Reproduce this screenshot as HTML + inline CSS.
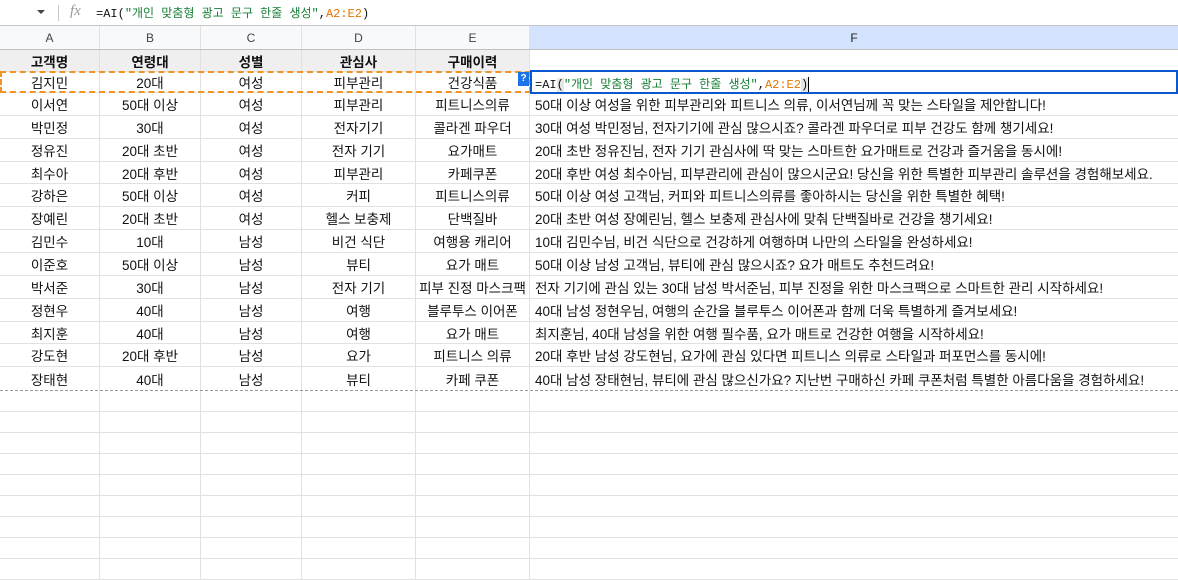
<!DOCTYPE html>
<html><head><meta charset="utf-8"><style>
*{box-sizing:border-box;margin:0;padding:0}
body{width:1178px;height:575px;overflow:hidden;background:#fff;font-family:"Liberation Sans","Noto Sans CJK KR",sans-serif;position:relative;color:#111}
#fb{position:absolute;left:0;top:0;width:1178px;height:26px;border-bottom:1px solid #c7c7c7;background:#fff}
.mono{font-family:"Liberation Mono","Noto Sans CJK KR",monospace}
.row{position:absolute;left:0;width:1178px;display:flex;border-bottom:1px solid #e1e1e1}
.c{border-right:1px solid #e1e1e1;height:100%;display:flex;align-items:center;justify-content:center;font-size:13.5px;white-space:nowrap;overflow:visible}
.w1{width:100px}.w2{width:101px}.w3{width:101px}.w4{width:114px}.w5{width:114px}.w6{width:648px;justify-content:flex-start;padding-left:5px;border-right:none}
.hd .c{font-size:12px;color:#444;background:#f8f9fa}
.g{color:#188038}.o{color:#e37400}
</style></head><body>
<div id="fb">
 <div style="position:absolute;left:37px;top:10px;width:0;height:0;border-left:4px solid transparent;border-right:4px solid transparent;border-top:4px solid #444"></div>
 <div style="position:absolute;left:58px;top:5px;width:1px;height:16px;background:#c7c7c7"></div>
 <div style="position:absolute;left:70px;top:3px;font-family:'Liberation Serif',serif;font-style:italic;font-size:15px;color:#999">fx</div>
 <div class="mono" style="position:absolute;left:96px;top:4px;font-size:12px;color:#111">=AI(<span class="g">"개인 맞춤형 광고 문구 한줄 생성"</span>,<span class="o">A2:E2</span>)</div>
</div>
<div class="row hd" style="top:26px;height:24px;border-bottom:1px solid #c0c0c0">
 <div class="c w1">A</div><div class="c w2">B</div><div class="c w3">C</div><div class="c w4">D</div><div class="c w5">E</div><div class="c w6" style="justify-content:center;padding-left:0;background:#d3e3fd;color:#1f1f1f">F</div>
</div>
<div class="row" style="top:50px;height:22px;font-weight:bold">
 <div class="c w1" style="background:#efefef;font-weight:bold">고객명</div><div class="c w2" style="background:#efefef;font-weight:bold">연령대</div><div class="c w3" style="background:#efefef;font-weight:bold">성별</div><div class="c w4" style="background:#efefef;font-weight:bold">관심사</div><div class="c w5" style="background:#efefef;font-weight:bold">구매이력</div><div class="c w6"></div>
</div>
<div class="row" style="top:72px;height:21px"><div class="c w1">김지민</div><div class="c w2">20대</div><div class="c w3">여성</div><div class="c w4">피부관리</div><div class="c w5">건강식품</div><div class="c w6"></div></div>
<div class="row" style="top:93px;height:23px"><div class="c w1">이서연</div><div class="c w2">50대 이상</div><div class="c w3">여성</div><div class="c w4">피부관리</div><div class="c w5">피트니스의류</div><div class="c w6">50대 이상 여성을 위한 피부관리와 피트니스 의류, 이서연님께 꼭 맞는 스타일을 제안합니다!</div></div>
<div class="row" style="top:116px;height:23px"><div class="c w1">박민정</div><div class="c w2">30대</div><div class="c w3">여성</div><div class="c w4">전자기기</div><div class="c w5">콜라겐 파우더</div><div class="c w6">30대 여성 박민정님, 전자기기에 관심 많으시죠? 콜라겐 파우더로 피부 건강도 함께 챙기세요!</div></div>
<div class="row" style="top:139px;height:23px"><div class="c w1">정유진</div><div class="c w2">20대 초반</div><div class="c w3">여성</div><div class="c w4">전자 기기</div><div class="c w5">요가매트</div><div class="c w6">20대 초반 정유진님, 전자 기기 관심사에 딱 맞는 스마트한 요가매트로 건강과 즐거움을 동시에!</div></div>
<div class="row" style="top:162px;height:22px"><div class="c w1">최수아</div><div class="c w2">20대 후반</div><div class="c w3">여성</div><div class="c w4">피부관리</div><div class="c w5">카페쿠폰</div><div class="c w6">20대 후반 여성 최수아님, 피부관리에 관심이 많으시군요! 당신을 위한 특별한 피부관리 솔루션을 경험해보세요.</div></div>
<div class="row" style="top:184px;height:23px"><div class="c w1">강하은</div><div class="c w2">50대 이상</div><div class="c w3">여성</div><div class="c w4">커피</div><div class="c w5">피트니스의류</div><div class="c w6">50대 이상 여성 고객님, 커피와 피트니스의류를 좋아하시는 당신을 위한 특별한 혜택!</div></div>
<div class="row" style="top:207px;height:23px"><div class="c w1">장예린</div><div class="c w2">20대 초반</div><div class="c w3">여성</div><div class="c w4">헬스 보충제</div><div class="c w5">단백질바</div><div class="c w6">20대 초반 여성 장예린님, 헬스 보충제 관심사에 맞춰 단백질바로 건강을 챙기세요!</div></div>
<div class="row" style="top:230px;height:23px"><div class="c w1">김민수</div><div class="c w2">10대</div><div class="c w3">남성</div><div class="c w4">비건 식단</div><div class="c w5">여행용 캐리어</div><div class="c w6">10대 김민수님, 비건 식단으로 건강하게 여행하며 나만의 스타일을 완성하세요!</div></div>
<div class="row" style="top:253px;height:23px"><div class="c w1">이준호</div><div class="c w2">50대 이상</div><div class="c w3">남성</div><div class="c w4">뷰티</div><div class="c w5">요가 매트</div><div class="c w6">50대 이상 남성 고객님, 뷰티에 관심 많으시죠? 요가 매트도 추천드려요!</div></div>
<div class="row" style="top:276px;height:23px"><div class="c w1">박서준</div><div class="c w2">30대</div><div class="c w3">남성</div><div class="c w4">전자 기기</div><div class="c w5">피부 진정 마스크팩</div><div class="c w6">전자 기기에 관심 있는 30대 남성 박서준님, 피부 진정을 위한 마스크팩으로 스마트한 관리 시작하세요!</div></div>
<div class="row" style="top:299px;height:23px"><div class="c w1">정현우</div><div class="c w2">40대</div><div class="c w3">남성</div><div class="c w4">여행</div><div class="c w5">블루투스 이어폰</div><div class="c w6">40대 남성 정현우님, 여행의 순간을 블루투스 이어폰과 함께 더욱 특별하게 즐겨보세요!</div></div>
<div class="row" style="top:322px;height:22px"><div class="c w1">최지훈</div><div class="c w2">40대</div><div class="c w3">남성</div><div class="c w4">여행</div><div class="c w5">요가 매트</div><div class="c w6">최지훈님, 40대 남성을 위한 여행 필수품, 요가 매트로 건강한 여행을 시작하세요!</div></div>
<div class="row" style="top:344px;height:23px"><div class="c w1">강도현</div><div class="c w2">20대 후반</div><div class="c w3">남성</div><div class="c w4">요가</div><div class="c w5">피트니스 의류</div><div class="c w6">20대 후반 남성 강도현님, 요가에 관심 있다면 피트니스 의류로 스타일과 퍼포먼스를 동시에!</div></div>
<div class="row" style="top:367px;height:24px;border-bottom:1px dashed #999"><div class="c w1">장태현</div><div class="c w2">40대</div><div class="c w3">남성</div><div class="c w4">뷰티</div><div class="c w5">카페 쿠폰</div><div class="c w6">40대 남성 장태현님, 뷰티에 관심 많으신가요? 지난번 구매하신 카페 쿠폰처럼 특별한 아름다움을 경험하세요!</div></div>
<div class="row" style="top:391px;height:21px"><div class="c w1"></div><div class="c w2"></div><div class="c w3"></div><div class="c w4"></div><div class="c w5"></div><div class="c w6"></div></div>
<div class="row" style="top:412px;height:21px"><div class="c w1"></div><div class="c w2"></div><div class="c w3"></div><div class="c w4"></div><div class="c w5"></div><div class="c w6"></div></div>
<div class="row" style="top:433px;height:21px"><div class="c w1"></div><div class="c w2"></div><div class="c w3"></div><div class="c w4"></div><div class="c w5"></div><div class="c w6"></div></div>
<div class="row" style="top:454px;height:21px"><div class="c w1"></div><div class="c w2"></div><div class="c w3"></div><div class="c w4"></div><div class="c w5"></div><div class="c w6"></div></div>
<div class="row" style="top:475px;height:21px"><div class="c w1"></div><div class="c w2"></div><div class="c w3"></div><div class="c w4"></div><div class="c w5"></div><div class="c w6"></div></div>
<div class="row" style="top:496px;height:21px"><div class="c w1"></div><div class="c w2"></div><div class="c w3"></div><div class="c w4"></div><div class="c w5"></div><div class="c w6"></div></div>
<div class="row" style="top:517px;height:21px"><div class="c w1"></div><div class="c w2"></div><div class="c w3"></div><div class="c w4"></div><div class="c w5"></div><div class="c w6"></div></div>
<div class="row" style="top:538px;height:21px"><div class="c w1"></div><div class="c w2"></div><div class="c w3"></div><div class="c w4"></div><div class="c w5"></div><div class="c w6"></div></div>
<div class="row" style="top:559px;height:21px"><div class="c w1"></div><div class="c w2"></div><div class="c w3"></div><div class="c w4"></div><div class="c w5"></div><div class="c w6"></div></div>
<div style="position:absolute;left:0;top:71px;width:531px;height:22px;border:2px dashed #f29423"></div>
<div style="position:absolute;left:518px;top:72px;width:11px;height:14px;background:#1a73e8;color:#fff;font-size:10px;font-weight:bold;text-align:center;line-height:14px">?</div>
<div style="position:absolute;left:530px;top:70px;width:648px;height:24px;border:2px solid #0b57d0;background:#fff">
 <div class="mono" style="position:absolute;left:3px;top:3px;font-size:12px;color:#111;white-space:nowrap">=AI<span style="background:#e6e6e6">(</span><span class="g">"개인 맞춤형 광고 문구 한줄 생성"</span>,<span class="o">A2:E2</span><span style="background:#e6e6e6">)</span><span style="display:inline-block;width:1px;height:15px;background:#000;vertical-align:middle"></span></div>
</div>
</body></html>
